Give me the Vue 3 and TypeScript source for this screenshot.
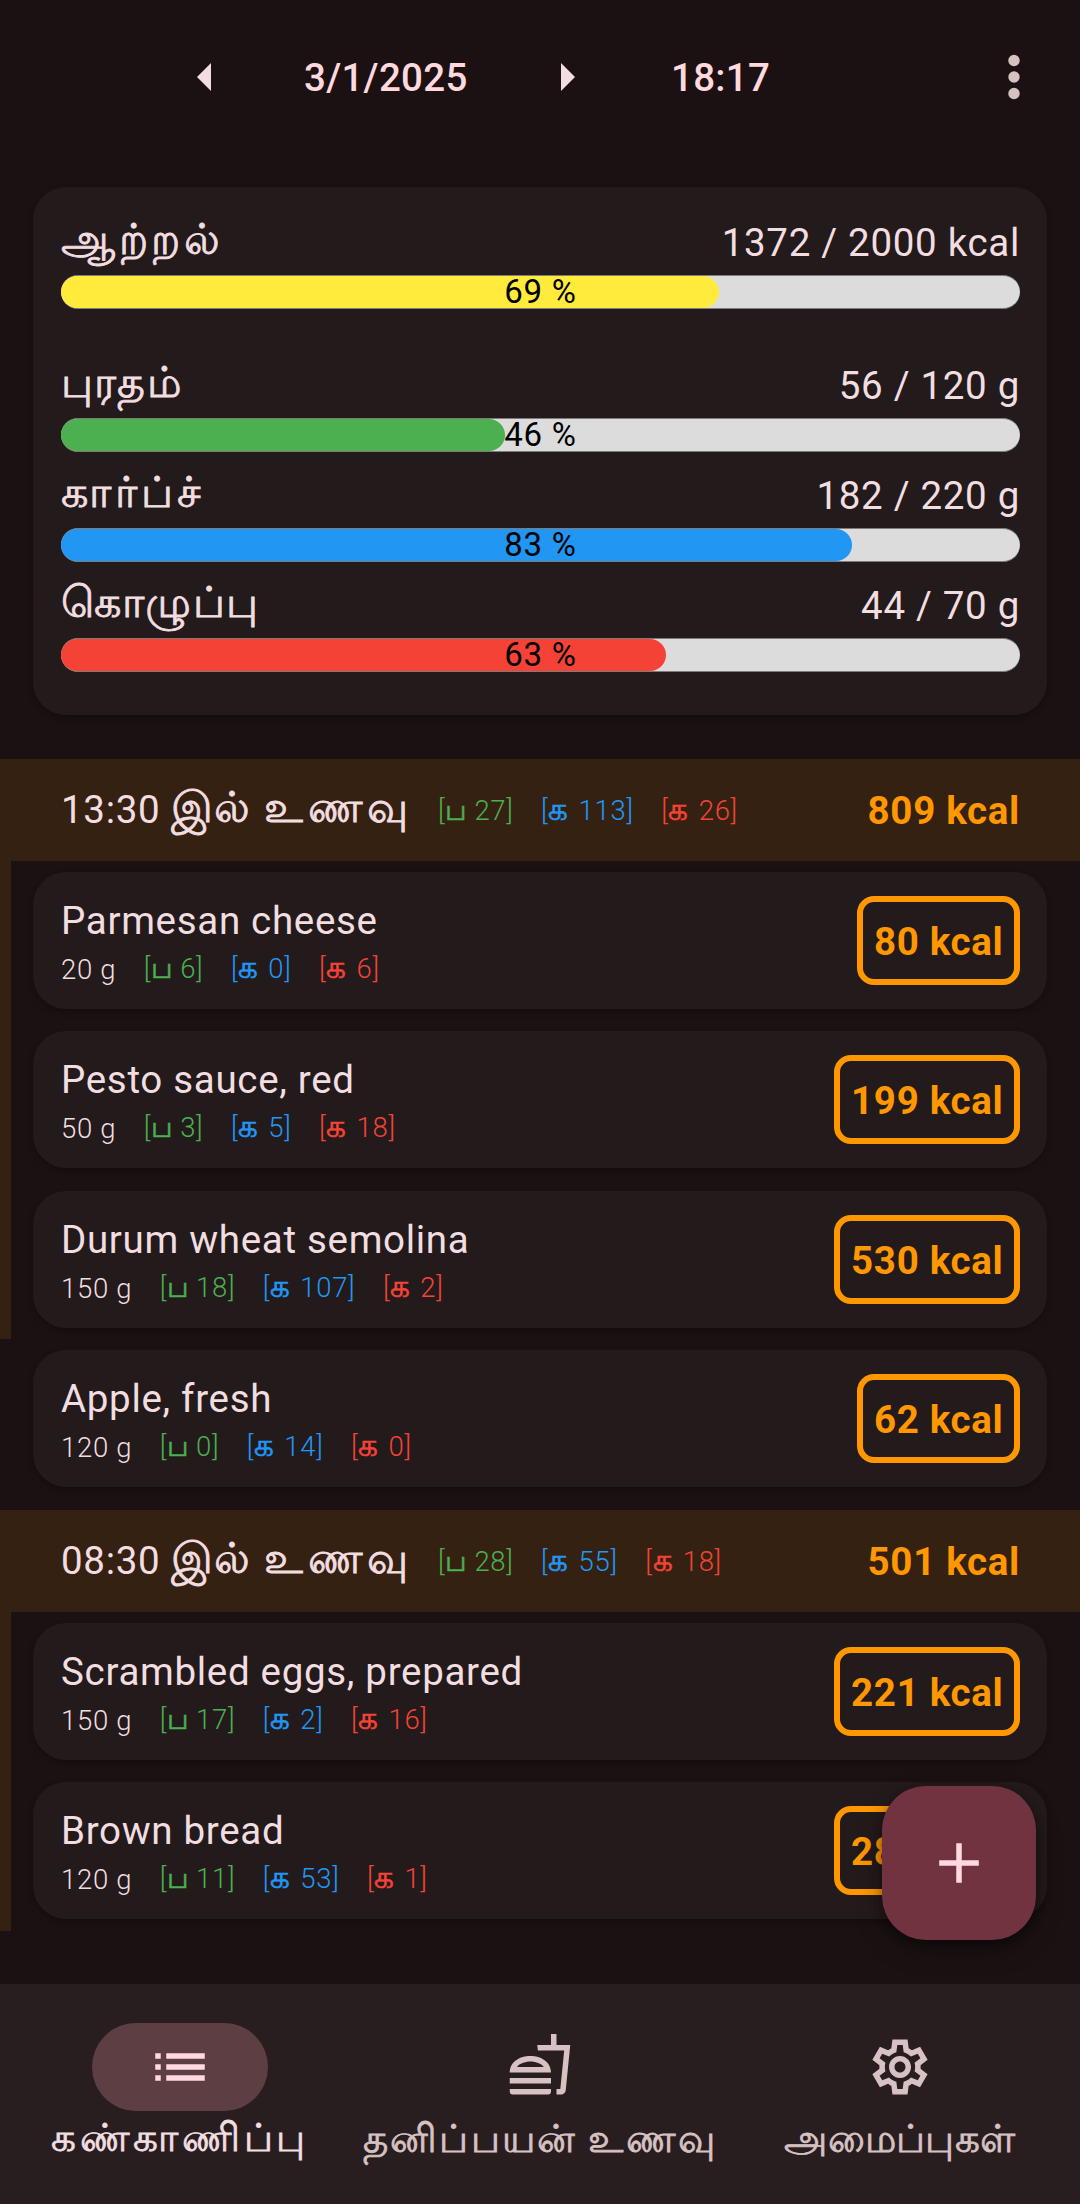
<script setup lang="ts">
interface Goal {
  label: string
  amount: string
  shown: string
  percent: number
  color: string
}
interface Food {
  name: string
  grams: string
  protein: number
  carbs: number
  fat: number
  kcal: number
}
interface Meal {
  time: string
  protein: number
  carbs: number
  fat: number
  kcal: number
  foods: Food[]
}

const goals: Goal[] = [
  { label: 'ஆற்றல்', amount: '1372 / 2000 kcal', shown: '69 %', percent: 68.6, color: 'energy' },
  { label: 'புரதம்', amount: '56 / 120 g', shown: '46 %', percent: 46.3, color: 'protein' },
  { label: 'கார்ப்ச்', amount: '182 / 220 g', shown: '83 %', percent: 82.5, color: 'carbs' },
  { label: 'கொழுப்பு', amount: '44 / 70 g', shown: '63 %', percent: 63.1, color: 'fat' },
]

const meals: Meal[] = [
  {
    time: '13:30', protein: 27, carbs: 113, fat: 26, kcal: 809,
    foods: [
      { name: 'Parmesan cheese', grams: '20 g', protein: 6, carbs: 0, fat: 6, kcal: 80 },
      { name: 'Pesto sauce, red', grams: '50 g', protein: 3, carbs: 5, fat: 18, kcal: 199 },
      { name: 'Durum wheat semolina', grams: '150 g', protein: 18, carbs: 107, fat: 2, kcal: 530 },
      { name: 'Apple, fresh', grams: '120 g', protein: 0, carbs: 14, fat: 0, kcal: 62 },
    ],
  },
  {
    time: '08:30', protein: 28, carbs: 55, fat: 18, kcal: 501,
    foods: [
      { name: 'Scrambled eggs, prepared', grams: '150 g', protein: 17, carbs: 2, fat: 16, kcal: 221 },
      { name: 'Brown bread', grams: '120 g', protein: 11, carbs: 53, fat: 1, kcal: 280 },
    ],
  },
]
</script>

<template>
  <div class="screen">
    <header class="bar">
      <svg class="prev" width="14" height="28" viewBox="0 0 14 28"><path d="M14 0v28L0 14z" /></svg>
      <span class="date">3/1/2025</span>
      <svg class="next" width="14" height="28" viewBox="0 0 14 28"><path d="M0 0v28l14-14z" /></svg>
      <span class="clock">18:17</span>
      <svg class="dots" width="12" height="46" viewBox="0 0 12 46">
        <circle cx="6" cy="6.5" r="5.7" /><circle cx="6" cy="23" r="5.7" /><circle cx="6" cy="39.5" r="5.7" />
      </svg>
    </header>

    <section class="goals">
      <div v-for="g in goals" :key="g.label" class="goal">
        <div class="line"><span class="ta" :class="'l-' + g.color">{{ g.label }}</span><span>{{ g.amount }}</span></div>
        <div class="track">
          <div class="fill" :class="g.color" :style="{ width: g.percent + '%' }"></div>
          <span class="pct">{{ g.shown }}</span>
        </div>
      </div>
    </section>

    <section v-for="(m, mi) in meals" :key="m.time" class="meal">
      <div class="head">
        <span class="time">{{ m.time }}</span>
        <span class="ta il">இல்</span><span class="ta food">உணவு</span>
        <div class="macros">
          <span class="p">[<i>ப</i> {{ m.protein }}]</span><span class="c">[<i>க</i> {{ m.carbs }}]</span><span class="f">[<i>க</i> {{ m.fat }}]</span>
        </div>
        <b class="sum">{{ m.kcal }} kcal</b>
      </div>
      <div v-for="(f, fi) in m.foods" :key="f.name" class="slot" :class="{ strip: !(mi === 0 && fi === 3) }">
        <div class="card">
          <div class="info">
            <div class="name">{{ f.name }}</div>
            <div class="macros">
              <span class="g">{{ f.grams }}</span><span class="p">[<i>ப</i> {{ f.protein }}]</span><span class="c">[<i>க</i> {{ f.carbs }}]</span><span class="f">[<i>க</i> {{ f.fat }}]</span>
            </div>
          </div>
          <b class="badge">{{ f.kcal }} kcal</b>
        </div>
      </div>
    </section>

    <button class="fab" aria-label="+">
      <svg width="66" height="66" viewBox="0 0 24 24"><path d="M19.2 13h-6.2v6.2h-2V13H4.8v-2H11V4.8h2V11h6.2z" /></svg>
    </button>

    <nav class="nav">
      <div class="tab on">
        <div class="pill"><svg viewBox="0 0 24 24"><path d="M3 13h2v-2H3v2zm0 4h2v-2H3v2zm0-8h2V7H3v2zm4 4h14v-2H7v2zm0 4h14v-2H7v2zM7 7v2h14V7H7z" /></svg></div>
        <span class="ta n1">கண்காணிப்பு</span>
      </div>
      <div class="tab">
        <div class="pill"><svg viewBox="0 1 24 24"><path d="M1 21.98c0 .56.45 1.01 1.01 1.01H15c.56 0 1.01-.45 1.01-1.01V21H1v.98zM8.5 8.99C4.75 8.99 1 11 1 15h15c0-4-3.75-6.01-7.5-6.01zM3.62 13c1.11-1.55 3.47-2.01 4.88-2.01s3.77.46 4.88 2.01H3.62zM1 17h15v2H1zM18 5V1h-2v4h-5l.23 2h9.56l-1.4 14H18v2h1.72c.84 0 1.53-.65 1.63-1.47L23 5h-5z" /></svg></div>
        <span class="ta n2">தனிப்பயன் உணவு</span>
      </div>
      <div class="tab">
        <div class="pill"><svg viewBox="0 0 24 24"><path fill-rule="evenodd" d="M9.25 22l-.4-3.2q-.325-.125-.612-.3-.288-.175-.563-.375L4.7 19.375l-2.75-4.75 2.575-1.95Q4.5 12.5 4.5 12.337v-.675q0-.162.025-.337L1.95 9.375l2.75-4.75 2.975 1.25q.275-.2.575-.375.3-.175.6-.3l.4-3.2h5.5l.4 3.2q.325.125.613.3.287.175.562.375l2.975-1.25 2.75 4.75-2.575 1.95q.025.175.025.337v.675q0 .163-.05.338l2.575 1.95-2.75 4.75-2.95-1.25q-.275.2-.575.375-.3.175-.6.3l-.4 3.2zM11 20h1.975l.35-2.65q.775-.2 1.438-.588.662-.387 1.212-.937l2.475 1.025.975-1.7-2.15-1.625q.125-.35.175-.737.05-.388.05-.788t-.05-.788q-.05-.387-.175-.737l2.15-1.625-.975-1.7-2.475 1.05q-.55-.575-1.212-.963-.663-.387-1.438-.587L13 4h-1.975l-.35 2.65q-.775.2-1.437.587-.663.388-1.213.938L5.55 7.15l-.975 1.7 2.15 1.6q-.125.375-.175.75-.05.375-.05.8 0 .4.05.775.05.375.175.75l-2.15 1.625.975 1.7 2.475-1.05q.55.575 1.213.962.662.388 1.437.588z" /><path d="M12 8c-2.21 0-4 1.79-4 4s1.79 4 4 4 4-1.79 4-4-1.79-4-4-4zm0 6c-1.1 0-2-.9-2-2s.9-2 2-2 2 .9 2 2-.9 2-2 2z" /></svg></div>
        <span class="ta n3">அமைப்புகள்</span>
      </div>
    </nav>
  </div>
</template>

<style>
html, body { margin: 0; background: #1b1113; }
</style>

<style scoped>
.screen {
  position: relative;
  display: flex;
  flex-direction: column;
  width: 1080px;
  height: 2204px;
  overflow: hidden;
  box-sizing: border-box;
  background: #1b1113;
  color: #f2dee0;
  font: 400 38.5px/44px Roboto, "Noto Sans", sans-serif;
  letter-spacing: 0.69px;
  white-space: nowrap;
}
.ta { -webkit-text-stroke: 0.8px currentColor; }
.bar {
  display: flex;
  align-items: center;
  height: 154px;
  padding-left: 197px;
  fill: #f2dee0;
}
.date, .clock { padding-top: 2px; color: #ffd9de; font-weight: 500; letter-spacing: 0.28px; }
.date { width: 164px; margin: 0 92px 0 93px; }
.next { margin-left: 1px; }
.clock { width: 98px; margin-left: 96px; }
.dots { margin-left: 239px; fill: #d7c1c3; }

.goals {
  height: 528px;
  margin: 33px 33px 44px;
  padding: 34px 27px 0 28px;
  box-sizing: border-box;
  border-radius: 33px;
  background: #231a1b;
  box-shadow: 0 3px 6px rgba(0, 0, 0, 0.3);
}
.goal { margin-bottom: 22px; }
.goal:first-child { margin-bottom: 55px; }
.line { display: flex; justify-content: space-between; height: 44px; margin-bottom: 10px; }
.line .ta { font-size: 43px; line-height: 37px; }
.l-energy { letter-spacing: 3.6px; }
.l-protein { letter-spacing: 1.2px; }
.l-carbs { letter-spacing: 4px; }
.l-fat { letter-spacing: 1.3px; }
.track {
  position: relative;
  height: 34px;
  box-sizing: border-box;
  border: solid #7f7b7b;
  border-width: 1px 0;
  border-radius: 17px;
  background: #dcdcdc;
}
.fill { height: 32px; border-radius: 16px; }
.energy { background: #ffeb3b; }
.protein { background: #4caf50; }
.carbs { background: #2196f3; }
.fat { background: #f44336; }
.pct {
  position: absolute;
  inset: -4px 0;
  text-align: center;
  color: #000;
  font-size: 33px;
  line-height: 40px;
  letter-spacing: 0.8px;
}

.meal { margin-bottom: 11.7px; }
.head {
  display: flex;
  align-items: center;
  height: 102px;
  padding: 0 60px 0 61px;
  box-sizing: border-box;
  background: #352112;
}
.time { width: 110px; }
.head .ta { padding-bottom: 6px; font-size: 43px; line-height: 44px; }
.il { width: 93px; }
.food { width: 144px; letter-spacing: 4.6px; }
.head .macros { margin-left: 30px; }
.sum { margin-left: auto; padding-top: 2px; color: #ff9800; }
.slot { padding: 11px 33px 11.33px; }
.strip { background: linear-gradient(90deg, #352112 11px, transparent 11px); }
.card {
  display: flex;
  align-items: center;
  justify-content: space-between;
  height: 137px;
  padding: 0 27px 0 28px;
  box-sizing: border-box;
  border-radius: 33px;
  background: #231a1b;
  box-shadow: 0 3px 6px rgba(0, 0, 0, 0.3);
}
.info { padding-top: 3px; }
.name { height: 44px; margin-bottom: 9px; }
.macros { display: flex; gap: 27.5px; font-size: 27.5px; font-weight: 300; line-height: 33px; }
.macros i { font-style: normal; font-weight: 400; font-size: 31px; line-height: 1px; -webkit-text-stroke: 0.6px currentColor; }
.g { padding-top: 1px; margin-bottom: -1px; }
.p { color: #4caf50; }
.macros .p i { font-size: 29px; letter-spacing: -0.3px; }
.c { color: #2196f3; }
.f { color: #f44336; }
.c i, .f i { letter-spacing: 2.8px; }
.badge {
  height: 89px;
  padding: 0 10.5px 0 11px;
  box-sizing: border-box;
  border: 6px solid #ff9800;
  border-radius: 17px;
  color: #ff9800;
  line-height: 79px;
}

.fab {
  position: absolute;
  left: 882px;
  top: 1786px;
  display: flex;
  align-items: center;
  justify-content: center;
  width: 154px;
  height: 154px;
  padding: 0;
  border: 0;
  border-radius: 44px;
  background: #723340;
  fill: #ffd9de;
  box-shadow: 0 10px 24px rgba(0, 0, 0, 0.35), 0 4px 8px rgba(0, 0, 0, 0.25);
}

.nav { display: flex; height: 220px; margin-top: auto; background: #281e1f; }
.tab { display: flex; flex: 1; flex-direction: column; align-items: center; padding-top: 39px; color: #d7c1c3; fill: #d7c1c3; }
.pill { display: flex; align-items: center; justify-content: center; width: 176px; height: 88px; border-radius: 44px; }
.pill svg { width: 66px; height: 66px; }
.on { color: #f2dee0; fill: #ffd9de; }
.on .pill { background: #5d3f43; }
.tab .ta { margin-top: 6px; font-size: 38.5px; line-height: 44px; }
.tab .n1 { margin-top: 5px; letter-spacing: 3.7px; }
.n2 { letter-spacing: 2.1px; }
.n3 { letter-spacing: 0.4px; }
</style>
